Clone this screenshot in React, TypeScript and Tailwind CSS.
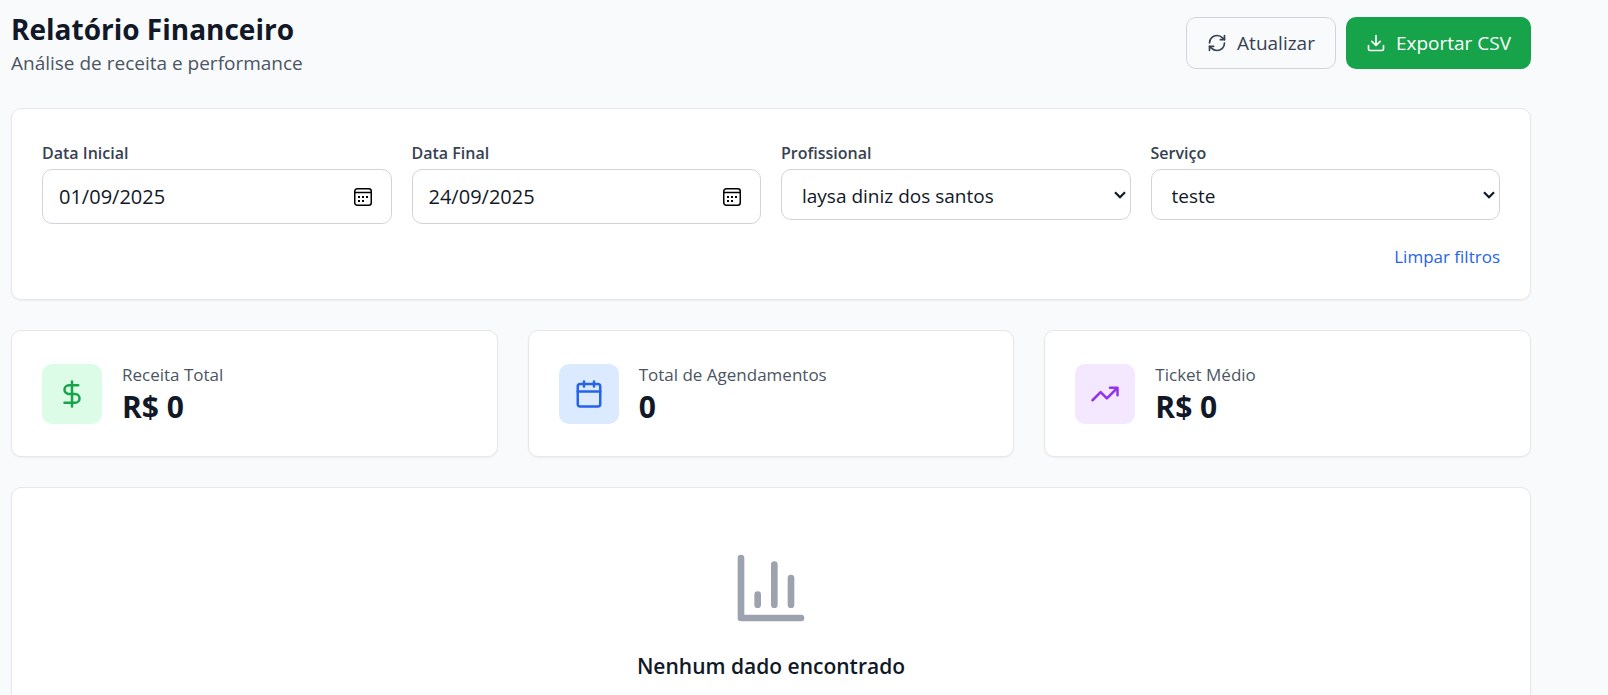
import { useState } from "react";
import type { ReactNode } from "react";

type IconProps = { className: string; children: ReactNode };

function Icon({ className, children }: IconProps) {
  return (
    <svg
      viewBox="0 0 24 24"
      fill="none"
      stroke="currentColor"
      strokeWidth={2}
      strokeLinecap="round"
      strokeLinejoin="round"
      aria-hidden="true"
      className={className}
    >
      {children}
    </svg>
  );
}

type DateFieldProps = { id: string; label: string; value: string; onChange: (v: string) => void };

function DateField({ id, label, value, onChange }: DateFieldProps) {
  return (
    <div>
      <label htmlFor={id} className="mb-[3px] block pt-0.5 text-[16px] leading-[25px] font-semibold text-[#374151]">
        {label}
      </label>
      <div className="flex h-[55px] items-center rounded-[10px] border border-[#d1d5db] pr-[18px] pl-4">
        <input
          id={id}
          type="text"
          value={value}
          onChange={(e) => onChange(e.target.value)}
          className="min-w-0 flex-1 bg-transparent text-[20px] leading-[30px] text-[#111827] outline-none"
        />
        <button type="button" aria-label={`Abrir calendário: ${label}`} className="text-black">
          <svg viewBox="0 0 20 20" fill="none" className="size-5" aria-hidden="true">
            <rect x="1.75" y="1.75" width="16.5" height="16.5" rx="2.5" stroke="currentColor" strokeWidth="1.5" />
            <path d="M2 5.5h16" stroke="currentColor" strokeWidth="1.5" />
            <path
              d="M5 9h2v2H5zM9 9h2v2H9zM13 9h2v2h-2zM5 13h2v2H5zM9 13h2v2H9z"
              fill="currentColor"
            />
          </svg>
        </button>
      </div>
    </div>
  );
}

type SelectFieldProps = { id: string; label: string; options: string[] };

function SelectField({ id, label, options }: SelectFieldProps) {
  return (
    <div>
      <label htmlFor={id} className="mb-[3px] block pt-0.5 text-[16px] leading-[25px] font-semibold text-[#374151]">
        {label}
      </label>
      <div className="grid items-center">
        <select
          id={id}
          className="col-start-1 row-start-1 h-[51px] w-full appearance-none rounded-[10px] border border-[#d1d5db] bg-white px-5 pt-[3px] text-[19px] text-[#111827]"
        >
          {options.map((o) => (
            <option key={o}>{o}</option>
          ))}
        </select>
        <svg
          viewBox="0 0 12 8"
          fill="none"
          aria-hidden="true"
          className="pointer-events-none col-start-1 row-start-1 mr-[5px] h-2 w-3 justify-self-end text-[#111827]"
        >
          <path d="M1 1.2 6 6.2 11 1.2" stroke="currentColor" strokeWidth="2.2" />
        </svg>
      </div>
    </div>
  );
}

type StatProps = { label: string; value: string; tone: string; icon: ReactNode };

function StatCard({ label, value, tone, icon }: StatProps) {
  return (
    <div className="flex items-center gap-5 rounded-[10px] border border-[#e5e7eb] bg-white p-[30px] shadow-xs">
      <div className={`flex size-[60px] items-center justify-center rounded-[10px] ${tone}`}>
        <Icon className="size-[30px]">{icon}</Icon>
      </div>
      <div>
        <p className="pt-px text-[17px] leading-[25px] text-[#4b5563]">{label}</p>
        <p className="text-[30px] leading-[39px] font-bold text-[#111827]">{value}</p>
      </div>
    </div>
  );
}

const stats: StatProps[] = [
  {
    label: "Receita Total",
    value: "R$ 0",
    tone: "bg-[#dcfce7] text-[#16a34a]",
    icon: <path d="M12 2v20M17 5H9.500a3.500 3.500 0 0 0 0 7h5a3.500 3.500 0 0 1 0 7H6" />,
  },
  {
    label: "Total de Agendamentos",
    value: "0",
    tone: "bg-[#dbeafe] text-[#2563eb]",
    icon: (
      <>
        <path d="M8 2v4M16 2v4M3 10h18" />
        <rect x="3" y="4" width="18" height="18" rx="2" />
      </>
    ),
  },
  {
    label: "Ticket Médio",
    value: "R$ 0",
    tone: "bg-[#f3e8ff] text-[#9333ea]",
    icon: <path d="M22 7l-8.500 8.500-5-5L2 17M16 7h6v6" />,
  },
];

export default function App() {
  const [start, setStart] = useState("01/09/2025");
  const [end, setEnd] = useState("24/09/2025");

  return (
    <div className="h-screen overflow-hidden bg-[#f9fafb] pt-2 pr-[77px] pl-[11px] font-['Segoe_UI','Open_Sans',sans-serif]">
      <main className="flex flex-col gap-[30px]">
        <header className="flex items-center justify-between">
          <div>
            <h1 className="pt-0.5 text-[28px] leading-[38px] font-bold text-[#111827]">Relatório Financeiro</h1>
            <p className="text-[19px] leading-[30px] text-[#4b5563]">Análise de receita e performance</p>
          </div>
          <div className="flex gap-[10px]">
            <button
              type="button"
              className="flex h-[52px] items-center gap-[10px] rounded-[10px] border border-[#d1d5db] px-5 text-[19px] text-[#374151]"
            >
              <Icon className="size-5">
                <path d="M3 12a9 9 0 0 1 9-9 9.750 9.750 0 0 1 6.740 2.740L21 8" />
                <path d="M21 3v5h-5" />
                <path d="M21 12a9 9 0 0 1-9 9 9.750 9.750 0 0 1-6.740-2.740L3 16" />
                <path d="M8 16H3v5" />
              </Icon>
              Atualizar
            </button>
            <button
              type="button"
              className="flex h-[52px] items-center gap-[10px] rounded-[10px] bg-[#16a34a] px-5 text-[19px] text-white"
            >
              <Icon className="size-5">
                <path d="M21 15v4a2 2 0 0 1-2 2H5a2 2 0 0 1-2-2v-4M7 10l5 5 5-5M12 15V3" />
              </Icon>
              Exportar CSV
            </button>
          </div>
        </header>

        <section className="rounded-[10px] border border-[#e5e7eb] bg-white p-[30px] shadow-xs">
          <div className="grid grid-cols-4 gap-5">
            <DateField id="data-inicial" label="Data Inicial" value={start} onChange={setStart} />
            <DateField id="data-final" label="Data Final" value={end} onChange={setEnd} />
            <SelectField id="profissional" label="Profissional" options={["laysa diniz dos santos"]} />
            <SelectField id="servico" label="Serviço" options={["teste"]} />
          </div>
          <div className="mt-5 flex justify-end">
            <button type="button" className="text-[17px] leading-[25px] text-[#2563eb]">
              Limpar filtros
            </button>
          </div>
        </section>

        <section className="grid grid-cols-3 gap-[30px]">
          {stats.map((s) => (
            <StatCard key={s.label} {...s} />
          ))}
        </section>

        <section className="flex flex-col items-center rounded-[10px] border border-[#e5e7eb] bg-white px-[30px] py-[60px] shadow-xs">
          <Icon className="mb-5 size-20 text-[#9ca3af]">
            <path d="M3 3v18h18M18 17V9M13 17V5M8 17v-3" />
          </Icon>
          <h2 className="text-[21px] leading-[36px] font-semibold text-[#111827]">Nenhum dado encontrado</h2>
        </section>
      </main>
    </div>
  );
}
